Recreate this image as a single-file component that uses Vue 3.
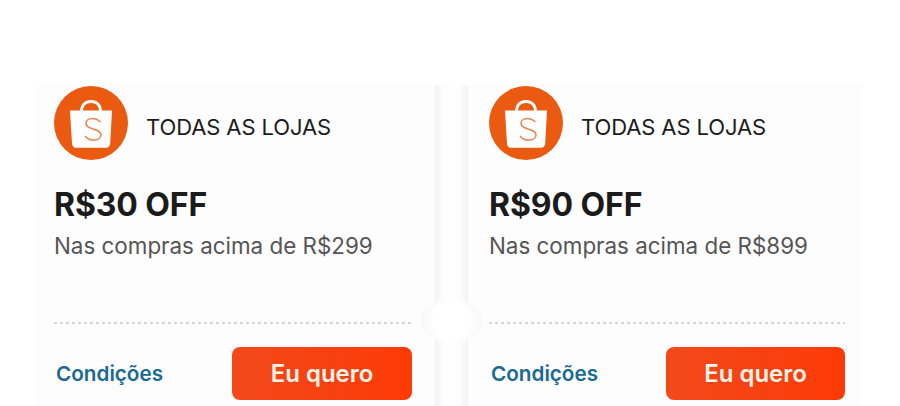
<template>
  <div class="pagina">
    <div class="cupons">
      <template v-for="(cupom, i) in cupons" :key="cupom.valor">
        <div class="cupom" :class="i === 0 ? 'cupom-esq' : 'cupom-dir'">
          <div class="loja">
            <svg class="logo" viewBox="0 0 74 74" aria-hidden="true">
              <circle cx="37" cy="37" r="37" fill="#ea5a10" />
              <path d="M26 26c0-8 4.500-12 11-12s11 4 11 12z" fill="#fff" />
              <path d="M29 25c0-5 3-8 8-8s8 3 8 8z" fill="#ea5a10" />
              <path d="M16 24.500h42l-1.800 33.300c-.1 2.400-1.700 3.900-4 3.900H22c-2.300 0-3.900-1.500-4-3.900z" fill="#fff" />
              <path d="M46 35.500c-2.200-2-5-3-7.500-3-3.800 0-6.500 2-6.500 5 0 6.800 15 4.500 15 11.200 0 3.400-3.300 5.300-7.300 5.300-3.200 0-6.200-1.300-8.200-3.600" fill="none" stroke="#ee8450" stroke-width="1.600" stroke-linecap="round" />
            </svg>
            <span class="loja-nome">TODAS AS LOJAS</span>
          </div>
          <div class="valor">{{ cupom.valor }}</div>
          <div class="regra">{{ cupom.regra }}</div>
          <div class="tracejado"></div>
          <div class="rodape">
            <a class="condicoes">Condições</a>
            <button type="button" class="btn-quero">Eu quero</button>
          </div>
        </div>
        <div v-if="i === 0" class="separador">
          <span class="furo"></span>
        </div>
      </template>
    </div>
  </div>
</template>

<script setup>
const cupons = [
  { valor: 'R$30 OFF', regra: 'Nas compras acima de R$299' },
  { valor: 'R$90 OFF', regra: 'Nas compras acima de R$899' }
];
</script>

<style>
html,
body {
  margin: 0;
  background: #fff;
}
</style>

<style scoped>
.pagina {
  width: 900px;
  height: 406px;
  overflow: hidden;
  background: #fff;
  font-family: Inter, "Liberation Sans", sans-serif;
}

.cupons {
  display: flex;
  padding: 85px 0 0 36px;
  height: 406px;
  box-sizing: border-box;
}

.cupom {
  display: flex;
  flex-direction: column;
  background: #fdfdfd;
  box-sizing: border-box;
}
.cupom-esq {
  width: 399px;
  padding: 1px 23px 0 18px;
}
.cupom-dir {
  width: 393px;
  padding: 1px 16px 0 21px;
}

.loja {
  display: flex;
  align-items: center;
  gap: 18px;
}
.logo {
  width: 74px;
  height: 74px;
  flex-shrink: 0;
}
.loja-nome {
  font-size: 22px;
  letter-spacing: -0.1px;
  color: #1c1c1c;
  position: relative;
  top: 4px;
}

.valor {
  margin-top: 26px;
  font-size: 32px;
  line-height: 38px;
  font-weight: 700;
  letter-spacing: -0.1px;
  color: #1b1b1b;
}
.regra {
  margin-top: 8px;
  font-size: 22.400px;
  line-height: 28px;
  color: #555;
}

.tracejado {
  margin-top: 62px;
  height: 2px;
  background: repeating-linear-gradient(90deg, #d4d4d4 0 3px, transparent 3px 6px);
}

.rodape {
  display: flex;
  align-items: center;
  justify-content: space-between;
  margin-top: 23px;
}
.condicoes {
  margin-left: 2px;
  font-size: 20.700px;
  font-weight: 600;
  color: #1a6a94;
}
.btn-quero {
  width: 180px;
  height: 53px;
  border: none;
  border-radius: 8px;
  background: linear-gradient(90deg, #f2491c, #fd3a06);
  color: #fff4ea;
  font-family: inherit;
  font-size: 24px;
  font-weight: 600;
}
.cupom-dir .btn-quero {
  width: 179px;
}

.separador {
  position: relative;
  width: 33px;
  flex-shrink: 0;
  background: linear-gradient(90deg, #f3f3f3, #fefefe 25%, #fefefe 70%, #f3f3f3);
}
.furo {
  position: absolute;
  left: -14px;
  top: 214px;
  width: 61px;
  height: 44px;
  border-radius: 50%;
  background: radial-gradient(circle, #fff 50%, #f1f1f1 100%);
}
</style>
